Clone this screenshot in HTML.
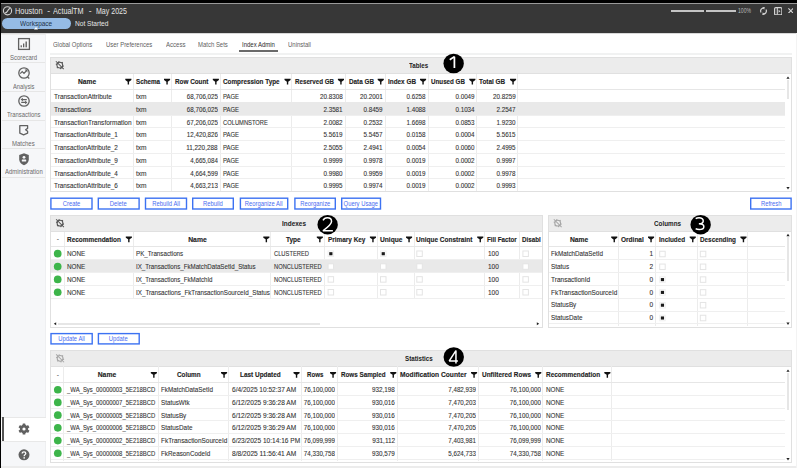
<!DOCTYPE html><html><head><meta charset="utf-8"><style>*{margin:0;padding:0;box-sizing:border-box}html,body{width:797px;height:468px;overflow:hidden}body{position:relative;background:#fff;font-family:"Liberation Sans",sans-serif;color:#333}.a{position:absolute}.t{position:absolute;white-space:nowrap}.btn{border:1.5px solid #3f74f2;background:#fff}</style></head><body>
<div class="a" style="left:0px;top:0px;width:797px;height:3px;background:#000"></div>
<div class="a" style="left:0px;top:3px;width:797px;height:1px;background:#9a9a9a"></div>
<div class="a" style="left:0px;top:4px;width:797px;height:28.8px;background:#373737"></div>
<div class="a" style="left:0px;top:32.8px;width:797px;height:0.8px;background:#d8d8d8"></div>
<svg class="a" style="left:2px;top:6px" width="11" height="11" viewBox="0 0 11 11"><circle cx="5.5" cy="4.8" r="4.1" fill="none" stroke="#d2d2d2" stroke-width="1.1"/><path d="M8.2 2.4C6.8 2.6 6.4 3.6 5.8 4.6C5.2 5.7 4.6 6.9 2.8 7.2" fill="none" stroke="#d2d2d2" stroke-width="1.2"/></svg>
<div class="t" style="left:15.3px;top:5.2px;font-size:8.6px;line-height:12px;color:#e6e6e6;transform:scaleX(0.8616);transform-origin:left;">Houston</div>
<div class="t" style="left:47.3px;top:5.2px;font-size:8.6px;line-height:12px;color:#e6e6e6;">-</div>
<div class="t" style="left:53.4px;top:5.2px;font-size:8.6px;line-height:12px;color:#e6e6e6;transform:scaleX(0.8425);transform-origin:left;">ActualTM</div>
<div class="t" style="left:88.8px;top:5.2px;font-size:8.6px;line-height:12px;color:#e6e6e6;">-</div>
<div class="t" style="left:95.6px;top:5.2px;font-size:8.6px;line-height:12px;color:#e6e6e6;transform:scaleX(0.8181);transform-origin:left;">May 2025</div>
<div class="a" style="left:2px;top:17.9px;width:68.7px;height:10.9px;border-radius:5.5px;background:#95bbe5"></div>
<svg class="a" style="left:34px;top:27px" width="4" height="2.5" viewBox="0 0 4 2.5"><path d="M0 2.5L2 0L4 2.5Z" fill="#fff"/></svg>
<div class="t" style="left:20.3px;top:18.6px;font-size:7px;line-height:10px;color:#22344a;transform:scaleX(0.9202);transform-origin:left;">Workspace</div>
<div class="t" style="left:75.3px;top:18.6px;font-size:7px;line-height:10px;color:#e6e6e6;transform:scaleX(0.9433);transform-origin:left;">Not Started</div>
<div class="a" style="left:671px;top:10px;width:33px;height:2px;background:#c4c4c4"></div>
<div class="a" style="left:706px;top:10px;width:29.6px;height:2px;background:#c4c4c4"></div>
<div class="t" style="left:737.7px;top:7px;font-size:6.3px;line-height:8px;color:#bdbdbd;transform:scaleX(0.8068);transform-origin:left;">100%</div>
<svg class="a" style="left:758.5px;top:5.5px" width="9" height="10" viewBox="0 0 9 10"><g transform="rotate(-30 4.5 5)"><path d="M1.6 5A2.9 2.9 0 0 1 6.2 2.6" fill="none" stroke="#d4d4d4" stroke-width="1.2"/><path d="M7.4 5A2.9 2.9 0 0 1 2.8 7.4" fill="none" stroke="#d4d4d4" stroke-width="1.2"/><path d="M5.2 1.2L7.6 2.2L5.8 4.2Z" fill="#d4d4d4"/><path d="M3.8 8.8L1.4 7.8L3.2 5.8Z" fill="#d4d4d4"/></g></svg>
<svg class="a" style="left:773.5px;top:6.5px" width="8.5" height="8.5" viewBox="0 0 8.5 8.5"><rect x="0.6" y="0.6" width="7.3" height="7.3" rx="1.2" fill="none" stroke="#d4d4d4" stroke-width="1.2"/><path d="M3.3 1V7.5" stroke="#d4d4d4" stroke-width="1.1"/><path d="M4.6 2.8L6.4 4.25L4.6 5.7Z" fill="#d4d4d4"/></svg>
<svg class="a" style="left:787.8px;top:7.8px" width="5.6" height="5.6" viewBox="0 0 5.6 5.6"><path d="M0.4 0.4L5.2 5.2M5.2 0.4L0.4 5.2" stroke="#d8d8d8" stroke-width="1.1"/></svg>
<div class="a" style="left:1px;top:34px;width:44.8px;height:434px;background:#f6f7f9;border-right:1px solid #eeeff1;border-top:1px solid #ececec"></div>
<div class="a" style="left:2px;top:62px;width:43px;height:1px;background:#e6e6e6"></div>
<div class="a" style="left:2px;top:90.5px;width:43px;height:1px;background:#e6e6e6"></div>
<div class="a" style="left:2px;top:119.5px;width:43px;height:1px;background:#e6e6e6"></div>
<div class="a" style="left:2px;top:148px;width:43px;height:1px;background:#e6e6e6"></div>
<div class="a" style="left:2px;top:176.5px;width:43px;height:1px;background:#e6e6e6"></div>
<svg class="a" style="left:17px;top:37px" width="14" height="14" viewBox="0 0 14 14"><rect x="1.6" y="1.6" width="10.8" height="10.8" fill="none" stroke="#616161" stroke-width="1.3"/><rect x="3.6" y="8.3" width="1.3" height="2" fill="#616161"/><rect x="6" y="6.5" width="1.3" height="3.8" fill="#616161"/><rect x="8.5" y="4.5" width="1.4" height="5.8" fill="#616161"/></svg>
<div class="t" style="left:9.7px;top:53.8px;font-size:6.5px;line-height:8px;color:#6a6a6a;transform:scaleX(0.9147);transform-origin:left;">Scorecard</div>
<svg class="a" style="left:16.5px;top:65.5px" width="14" height="14" viewBox="0 0 14 14"><circle cx="7" cy="7" r="5.2" fill="none" stroke="#616161" stroke-width="1.3"/><path d="M3.2 7.6L5.2 5.6L7 7.4L9.2 5" fill="none" stroke="#616161" stroke-width="1.2"/><path d="M7.6 3.6H10.4V6.4Z" fill="#616161"/><path d="M10.5 11L12.3 12.5" stroke="#616161" stroke-width="1.3"/></svg>
<div class="t" style="left:13px;top:82.6px;font-size:6.5px;line-height:8px;color:#6a6a6a;transform:scaleX(0.8883);transform-origin:left;">Analysis</div>
<svg class="a" style="left:16.7px;top:94.3px" width="14" height="14" viewBox="0 0 14 14"><circle cx="7" cy="7" r="5.2" fill="none" stroke="#616161" stroke-width="1.3"/><path d="M5.3 5.6H9.8M8.7 8.4H4.2" stroke="#616161" stroke-width="1.1"/><path d="M3.6 5.6L5.9 3.8V7.4Z" fill="#616161"/><path d="M10.4 8.4L8.1 6.6V10.2Z" fill="#616161"/></svg>
<div class="t" style="left:6.9px;top:111.2px;font-size:6.5px;line-height:8px;color:#6a6a6a;transform:scaleX(0.9034);transform-origin:left;">Transactions</div>
<svg class="a" style="left:17px;top:123px" width="14" height="14" viewBox="0 0 14 14"><path d="M2.8 2.6H10.6V5.4L8.6 6.8L10.6 8.2V10.2L6.6 11.8L2.8 10.2Z" fill="none" stroke="#616161" stroke-width="1.3" stroke-linejoin="round"/></svg>
<div class="t" style="left:12.3px;top:139.9px;font-size:6.5px;line-height:8px;color:#6a6a6a;transform:scaleX(0.9240);transform-origin:left;">Matches</div>
<svg class="a" style="left:17px;top:151.5px" width="14" height="14" viewBox="0 0 14 14"><path d="M7 1.2L11.8 3V7.2C11.8 10 9.8 12.2 7 13.2C4.2 12.2 2.2 10 2.2 7.2V3Z" fill="#616161"/><circle cx="7" cy="5.3" r="1.4" fill="#f6f7f9"/><rect x="4.8" y="7.6" width="4.4" height="2" rx="0.5" fill="#f6f7f9"/></svg>
<div class="t" style="left:4.6px;top:168.1px;font-size:6.5px;line-height:8px;color:#6a6a6a;transform:scaleX(0.9154);transform-origin:left;">Administration</div>
<div class="a" style="left:1px;top:416.5px;width:44.5px;height:25px;background:#fff;border-top:1px solid #e8e8e8;border-bottom:1px solid #e8e8e8"></div>
<div class="a" style="left:2.2px;top:416.8px;width:1.5px;height:24.5px;background:#555"></div>
<svg class="a" style="left:18px;top:423px" width="12" height="12" viewBox="0 0 12 12"><circle cx="6" cy="6" r="4.2" fill="#616161"/><rect x="4.6" y="0.4" width="2.8" height="3" rx="0.6" fill="#616161" transform="rotate(0 6 6)"/><rect x="4.6" y="0.4" width="2.8" height="3" rx="0.6" fill="#616161" transform="rotate(60 6 6)"/><rect x="4.6" y="0.4" width="2.8" height="3" rx="0.6" fill="#616161" transform="rotate(120 6 6)"/><rect x="4.6" y="0.4" width="2.8" height="3" rx="0.6" fill="#616161" transform="rotate(180 6 6)"/><rect x="4.6" y="0.4" width="2.8" height="3" rx="0.6" fill="#616161" transform="rotate(240 6 6)"/><rect x="4.6" y="0.4" width="2.8" height="3" rx="0.6" fill="#616161" transform="rotate(300 6 6)"/><circle cx="6" cy="6" r="1.6" fill="#fff"/></svg>
<svg class="a" style="left:18px;top:449px" width="12" height="12" viewBox="0 0 12 12"><circle cx="6" cy="5.8" r="5.5" fill="#616161"/><path d="M4.2 4.6C4.2 3.5 5 2.8 6 2.8C7 2.8 7.8 3.5 7.8 4.4C7.8 5.5 6.4 5.7 6.2 6.9V7.3" fill="none" stroke="#fff" stroke-width="1.3"/><circle cx="6.15" cy="8.9" r="0.8" fill="#fff"/></svg>
<div class="t" style="left:53.4px;top:41px;font-size:6.5px;line-height:8px;color:#5e5e5e;transform:scaleX(0.9117);transform-origin:left;">Global Options</div>
<div class="t" style="left:106.2px;top:41px;font-size:6.5px;line-height:8px;color:#5e5e5e;transform:scaleX(0.9135);transform-origin:left;">User Preferences</div>
<div class="t" style="left:165.5px;top:41px;font-size:6.5px;line-height:8px;color:#5e5e5e;transform:scaleX(0.9308);transform-origin:left;">Access</div>
<div class="t" style="left:198.4px;top:41px;font-size:6.5px;line-height:8px;color:#5e5e5e;transform:scaleX(0.9166);transform-origin:left;">Match Sets</div>
<div class="t" style="left:241.8px;top:41px;font-size:6.5px;line-height:8px;color:#2a2a2a;transform:scaleX(0.9197);transform-origin:left;">Index Admin</div>
<div class="t" style="left:288px;top:41px;font-size:6.5px;line-height:8px;color:#5e5e5e;transform:scaleX(0.9186);transform-origin:left;">Uninstall</div>
<div class="a" style="left:239px;top:50px;width:38.7px;height:2px;background:#6a6a6a"></div>
<div class="a" style="left:50px;top:53px;width:742px;height:2px;background:#f1f2f2"></div>
<div class="a" style="left:50px;top:56.8px;width:742px;height:135px;border:1px solid #e0e0e0;background:#fff"></div>
<div class="a" style="left:51px;top:57.8px;width:740px;height:16.7px;background:#ececec;border-bottom:1px solid #e0e0e0"></div>
<svg class="a" style="left:53px;top:59px" width="12" height="12" viewBox="0 0 12 12"><circle cx="6.80" cy="6.15" r="2.9" fill="none" stroke="#555555" stroke-width="1.05"/><path d="M9.60 6.90L10.76 7.21M7.55 8.95L7.86 10.11M4.75 8.20L3.90 9.05M4.00 5.40L2.84 5.09M6.05 3.35L5.74 2.19M8.85 4.10L9.70 3.25" stroke="#555555" stroke-width="1.1"/><path d="M2.90 2.25L10.70 10.05" stroke="#555555" stroke-width="1.05"/></svg>
<div class="t" style="left:409.4px;top:61.15px;font-size:6.8px;line-height:10px;font-weight:700;color:#222;transform:scaleX(0.9126);transform-origin:left;">Tables</div>
<div class="a" style="left:133px;top:73.5px;width:1px;height:117.5px;background:#ececec"></div>
<div class="a" style="left:171px;top:73.5px;width:1px;height:117.5px;background:#ececec"></div>
<div class="a" style="left:220px;top:73.5px;width:1px;height:117.5px;background:#ececec"></div>
<div class="a" style="left:291px;top:73.5px;width:1px;height:117.5px;background:#ececec"></div>
<div class="a" style="left:344.8px;top:73.5px;width:1px;height:117.5px;background:#ececec"></div>
<div class="a" style="left:384.7px;top:73.5px;width:1px;height:117.5px;background:#ececec"></div>
<div class="a" style="left:427.8px;top:73.5px;width:1px;height:117.5px;background:#ececec"></div>
<div class="a" style="left:475.7px;top:73.5px;width:1px;height:117.5px;background:#ececec"></div>
<div class="a" style="left:516.6px;top:73.5px;width:1px;height:117.5px;background:#ececec"></div>
<div class="a" style="left:51px;top:88.5px;width:734px;height:1px;background:#e6e6e6"></div>
<div class="t" style="left:78.4px;top:76.9px;font-size:6.8px;line-height:10px;font-weight:700;color:#222;transform:scaleX(0.9827);transform-origin:left;-webkit-text-stroke:0.12px #222;">Name</div>
<svg class="a" style="left:124px;top:77px" width="9" height="9" viewBox="0 0 9 9"><g transform="translate(1.30 1.80)"><path d="M0 0H6.1V1.3L3.75 2.9V5.8H2.35V2.9L0 1.3Z" fill="#111"/></g></svg>
<div class="t" style="left:135.7px;top:76.9px;font-size:6.8px;line-height:10px;font-weight:700;color:#222;transform:scaleX(0.9240);transform-origin:left;-webkit-text-stroke:0.12px #222;">Schema</div>
<svg class="a" style="left:163px;top:77px" width="9" height="9" viewBox="0 0 9 9"><g transform="translate(1.00 1.80)"><path d="M0 0H6.1V1.3L3.75 2.9V5.8H2.35V2.9L0 1.3Z" fill="#111"/></g></svg>
<div class="t" style="left:174.5px;top:76.9px;font-size:6.8px;line-height:10px;font-weight:700;color:#222;transform:scaleX(0.9337);transform-origin:left;-webkit-text-stroke:0.12px #222;">Row Count</div>
<svg class="a" style="left:211px;top:77px" width="9" height="9" viewBox="0 0 9 9"><g transform="translate(1.80 1.80)"><path d="M0 0H6.1V1.3L3.75 2.9V5.8H2.35V2.9L0 1.3Z" fill="#111"/></g></svg>
<div class="t" style="left:223px;top:76.9px;font-size:6.8px;line-height:10px;font-weight:700;color:#222;transform:scaleX(0.9323);transform-origin:left;-webkit-text-stroke:0.12px #222;">Compression Type</div>
<svg class="a" style="left:283px;top:77px" width="9" height="9" viewBox="0 0 9 9"><g transform="translate(1.50 1.80)"><path d="M0 0H6.1V1.3L3.75 2.9V5.8H2.35V2.9L0 1.3Z" fill="#111"/></g></svg>
<div class="t" style="left:294.6px;top:76.9px;font-size:6.8px;line-height:10px;font-weight:700;color:#222;transform:scaleX(0.9131);transform-origin:left;-webkit-text-stroke:0.12px #222;">Reserved GB</div>
<svg class="a" style="left:336px;top:77px" width="9" height="9" viewBox="0 0 9 9"><g transform="translate(1.90 1.80)"><path d="M0 0H6.1V1.3L3.75 2.9V5.8H2.35V2.9L0 1.3Z" fill="#111"/></g></svg>
<div class="t" style="left:348.5px;top:76.9px;font-size:6.8px;line-height:10px;font-weight:700;color:#222;transform:scaleX(0.9318);transform-origin:left;-webkit-text-stroke:0.12px #222;">Data GB</div>
<svg class="a" style="left:376px;top:77px" width="9" height="9" viewBox="0 0 9 9"><g transform="translate(1.70 1.80)"><path d="M0 0H6.1V1.3L3.75 2.9V5.8H2.35V2.9L0 1.3Z" fill="#111"/></g></svg>
<div class="t" style="left:388px;top:76.9px;font-size:6.8px;line-height:10px;font-weight:700;color:#222;transform:scaleX(0.9380);transform-origin:left;-webkit-text-stroke:0.12px #222;">Index GB</div>
<svg class="a" style="left:419px;top:77px" width="9" height="9" viewBox="0 0 9 9"><g transform="translate(1.00 1.80)"><path d="M0 0H6.1V1.3L3.75 2.9V5.8H2.35V2.9L0 1.3Z" fill="#111"/></g></svg>
<div class="t" style="left:431px;top:76.9px;font-size:6.8px;line-height:10px;font-weight:700;color:#222;transform:scaleX(0.9183);transform-origin:left;-webkit-text-stroke:0.12px #222;">Unused GB</div>
<svg class="a" style="left:468px;top:77px" width="9" height="9" viewBox="0 0 9 9"><g transform="translate(1.30 1.80)"><path d="M0 0H6.1V1.3L3.75 2.9V5.8H2.35V2.9L0 1.3Z" fill="#111"/></g></svg>
<div class="t" style="left:479.4px;top:76.9px;font-size:6.8px;line-height:10px;font-weight:700;color:#222;transform:scaleX(0.9415);transform-origin:left;-webkit-text-stroke:0.12px #222;">Total GB</div>
<svg class="a" style="left:509px;top:77px" width="9" height="9" viewBox="0 0 9 9"><g transform="translate(1.00 1.80)"><path d="M0 0H6.1V1.3L3.75 2.9V5.8H2.35V2.9L0 1.3Z" fill="#111"/></g></svg>
<div class="a" style="left:51px;top:101.75px;width:734px;height:1px;background:#efefef"></div>
<div class="t" style="left:54px;top:92.08px;font-size:7.4px;line-height:10px;color:#333;transform:scaleX(0.8783);transform-origin:left;-webkit-text-stroke:0.1px #333;">TransactionAttribute</div>
<div class="t" style="left:135.7px;top:92.08px;font-size:7.4px;line-height:10px;color:#333;transform:scaleX(0.8904);transform-origin:left;-webkit-text-stroke:0.1px #333;">txm</div>
<div class="t" style="left:180.86px;top:92.08px;font-size:7.4px;line-height:10px;color:#333;transform:scaleX(0.8431);transform-origin:right;-webkit-text-stroke:0.1px #333;">68,706,025</div>
<div class="t" style="left:223px;top:92.08px;font-size:7.4px;line-height:10px;color:#333;transform:scaleX(0.8018);transform-origin:left;-webkit-text-stroke:0.1px #333;">PAGE</div>
<div class="t" style="left:316.35px;top:92.08px;font-size:7.4px;line-height:10px;color:#333;transform:scaleX(0.8540);transform-origin:right;-webkit-text-stroke:0.1px #333;">20.8308</div>
<div class="t" style="left:356.05px;top:92.08px;font-size:7.4px;line-height:10px;color:#333;transform:scaleX(0.8540);transform-origin:right;-webkit-text-stroke:0.1px #333;">20.2001</div>
<div class="t" style="left:403.17px;top:92.08px;font-size:7.4px;line-height:10px;color:#333;transform:scaleX(0.8495);transform-origin:right;-webkit-text-stroke:0.1px #333;">0.6258</div>
<div class="t" style="left:451.87px;top:92.08px;font-size:7.4px;line-height:10px;color:#333;transform:scaleX(0.8495);transform-origin:right;-webkit-text-stroke:0.1px #333;">0.0049</div>
<div class="t" style="left:488.55px;top:92.08px;font-size:7.4px;line-height:10px;color:#333;transform:scaleX(0.8540);transform-origin:right;-webkit-text-stroke:0.1px #333;">20.8259</div>
<div class="a" style="left:51px;top:102.25px;width:734px;height:12.75px;background:#e9e9e9"></div>
<div class="a" style="left:51px;top:114.5px;width:734px;height:1px;background:#efefef"></div>
<div class="t" style="left:54px;top:104.83px;font-size:7.4px;line-height:10px;color:#333;transform:scaleX(0.8844);transform-origin:left;-webkit-text-stroke:0.1px #333;">Transactions</div>
<div class="t" style="left:135.7px;top:104.83px;font-size:7.4px;line-height:10px;color:#333;transform:scaleX(0.8904);transform-origin:left;-webkit-text-stroke:0.1px #333;">txm</div>
<div class="t" style="left:180.86px;top:104.83px;font-size:7.4px;line-height:10px;color:#333;transform:scaleX(0.8431);transform-origin:right;-webkit-text-stroke:0.1px #333;">68,706,025</div>
<div class="t" style="left:223px;top:104.83px;font-size:7.4px;line-height:10px;color:#333;transform:scaleX(0.8018);transform-origin:left;-webkit-text-stroke:0.1px #333;">PAGE</div>
<div class="t" style="left:320.47px;top:104.83px;font-size:7.4px;line-height:10px;color:#333;transform:scaleX(0.8495);transform-origin:right;-webkit-text-stroke:0.1px #333;">2.3581</div>
<div class="t" style="left:360.17px;top:104.83px;font-size:7.4px;line-height:10px;color:#333;transform:scaleX(0.8495);transform-origin:right;-webkit-text-stroke:0.1px #333;">0.8459</div>
<div class="t" style="left:403.17px;top:104.83px;font-size:7.4px;line-height:10px;color:#333;transform:scaleX(0.8495);transform-origin:right;-webkit-text-stroke:0.1px #333;">1.4088</div>
<div class="t" style="left:451.87px;top:104.83px;font-size:7.4px;line-height:10px;color:#333;transform:scaleX(0.8495);transform-origin:right;-webkit-text-stroke:0.1px #333;">0.1034</div>
<div class="t" style="left:492.67px;top:104.83px;font-size:7.4px;line-height:10px;color:#333;transform:scaleX(0.8495);transform-origin:right;-webkit-text-stroke:0.1px #333;">2.2547</div>
<div class="a" style="left:51px;top:127.25px;width:734px;height:1px;background:#efefef"></div>
<div class="t" style="left:54px;top:117.58px;font-size:7.4px;line-height:10px;color:#333;transform:scaleX(0.8847);transform-origin:left;-webkit-text-stroke:0.1px #333;">TransactionTransformation</div>
<div class="t" style="left:135.7px;top:117.58px;font-size:7.4px;line-height:10px;color:#333;transform:scaleX(0.8904);transform-origin:left;-webkit-text-stroke:0.1px #333;">txm</div>
<div class="t" style="left:180.86px;top:117.58px;font-size:7.4px;line-height:10px;color:#333;transform:scaleX(0.8431);transform-origin:right;-webkit-text-stroke:0.1px #333;">67,206,025</div>
<div class="t" style="left:223px;top:117.58px;font-size:7.4px;line-height:10px;color:#333;transform:scaleX(0.7822);transform-origin:left;-webkit-text-stroke:0.1px #333;">COLUMNSTORE</div>
<div class="t" style="left:320.47px;top:117.58px;font-size:7.4px;line-height:10px;color:#333;transform:scaleX(0.8495);transform-origin:right;-webkit-text-stroke:0.1px #333;">2.0082</div>
<div class="t" style="left:360.17px;top:117.58px;font-size:7.4px;line-height:10px;color:#333;transform:scaleX(0.8495);transform-origin:right;-webkit-text-stroke:0.1px #333;">0.2532</div>
<div class="t" style="left:403.17px;top:117.58px;font-size:7.4px;line-height:10px;color:#333;transform:scaleX(0.8495);transform-origin:right;-webkit-text-stroke:0.1px #333;">1.6698</div>
<div class="t" style="left:451.87px;top:117.58px;font-size:7.4px;line-height:10px;color:#333;transform:scaleX(0.8495);transform-origin:right;-webkit-text-stroke:0.1px #333;">0.0853</div>
<div class="t" style="left:492.67px;top:117.58px;font-size:7.4px;line-height:10px;color:#333;transform:scaleX(0.8495);transform-origin:right;-webkit-text-stroke:0.1px #333;">1.9230</div>
<div class="a" style="left:51px;top:140px;width:734px;height:1px;background:#efefef"></div>
<div class="t" style="left:54px;top:130.32px;font-size:7.4px;line-height:10px;color:#333;transform:scaleX(0.8607);transform-origin:left;-webkit-text-stroke:0.1px #333;">TransactionAttribute_1</div>
<div class="t" style="left:135.7px;top:130.32px;font-size:7.4px;line-height:10px;color:#333;transform:scaleX(0.8904);transform-origin:left;-webkit-text-stroke:0.1px #333;">txm</div>
<div class="t" style="left:180.86px;top:130.32px;font-size:7.4px;line-height:10px;color:#333;transform:scaleX(0.8431);transform-origin:right;-webkit-text-stroke:0.1px #333;">12,420,826</div>
<div class="t" style="left:223px;top:130.32px;font-size:7.4px;line-height:10px;color:#333;transform:scaleX(0.8018);transform-origin:left;-webkit-text-stroke:0.1px #333;">PAGE</div>
<div class="t" style="left:320.47px;top:130.32px;font-size:7.4px;line-height:10px;color:#333;transform:scaleX(0.8495);transform-origin:right;-webkit-text-stroke:0.1px #333;">5.5619</div>
<div class="t" style="left:360.17px;top:130.32px;font-size:7.4px;line-height:10px;color:#333;transform:scaleX(0.8495);transform-origin:right;-webkit-text-stroke:0.1px #333;">5.5457</div>
<div class="t" style="left:403.17px;top:130.32px;font-size:7.4px;line-height:10px;color:#333;transform:scaleX(0.8495);transform-origin:right;-webkit-text-stroke:0.1px #333;">0.0158</div>
<div class="t" style="left:451.87px;top:130.32px;font-size:7.4px;line-height:10px;color:#333;transform:scaleX(0.8495);transform-origin:right;-webkit-text-stroke:0.1px #333;">0.0004</div>
<div class="t" style="left:492.67px;top:130.32px;font-size:7.4px;line-height:10px;color:#333;transform:scaleX(0.8495);transform-origin:right;-webkit-text-stroke:0.1px #333;">5.5615</div>
<div class="a" style="left:51px;top:152.75px;width:734px;height:1px;background:#efefef"></div>
<div class="t" style="left:54px;top:143.07px;font-size:7.4px;line-height:10px;color:#333;transform:scaleX(0.8607);transform-origin:left;-webkit-text-stroke:0.1px #333;">TransactionAttribute_2</div>
<div class="t" style="left:135.7px;top:143.07px;font-size:7.4px;line-height:10px;color:#333;transform:scaleX(0.8904);transform-origin:left;-webkit-text-stroke:0.1px #333;">txm</div>
<div class="t" style="left:181.41px;top:143.07px;font-size:7.4px;line-height:10px;color:#333;transform:scaleX(0.8558);transform-origin:right;-webkit-text-stroke:0.1px #333;">11,220,288</div>
<div class="t" style="left:223px;top:143.07px;font-size:7.4px;line-height:10px;color:#333;transform:scaleX(0.8018);transform-origin:left;-webkit-text-stroke:0.1px #333;">PAGE</div>
<div class="t" style="left:320.47px;top:143.07px;font-size:7.4px;line-height:10px;color:#333;transform:scaleX(0.8495);transform-origin:right;-webkit-text-stroke:0.1px #333;">2.5055</div>
<div class="t" style="left:360.17px;top:143.07px;font-size:7.4px;line-height:10px;color:#333;transform:scaleX(0.8495);transform-origin:right;-webkit-text-stroke:0.1px #333;">2.4941</div>
<div class="t" style="left:403.17px;top:143.07px;font-size:7.4px;line-height:10px;color:#333;transform:scaleX(0.8495);transform-origin:right;-webkit-text-stroke:0.1px #333;">0.0054</div>
<div class="t" style="left:451.87px;top:143.07px;font-size:7.4px;line-height:10px;color:#333;transform:scaleX(0.8495);transform-origin:right;-webkit-text-stroke:0.1px #333;">0.0060</div>
<div class="t" style="left:492.67px;top:143.07px;font-size:7.4px;line-height:10px;color:#333;transform:scaleX(0.8495);transform-origin:right;-webkit-text-stroke:0.1px #333;">2.4995</div>
<div class="a" style="left:51px;top:165.5px;width:734px;height:1px;background:#efefef"></div>
<div class="t" style="left:54px;top:155.82px;font-size:7.4px;line-height:10px;color:#333;transform:scaleX(0.8607);transform-origin:left;-webkit-text-stroke:0.1px #333;">TransactionAttribute_9</div>
<div class="t" style="left:135.7px;top:155.82px;font-size:7.4px;line-height:10px;color:#333;transform:scaleX(0.8904);transform-origin:left;-webkit-text-stroke:0.1px #333;">txm</div>
<div class="t" style="left:184.98px;top:155.82px;font-size:7.4px;line-height:10px;color:#333;transform:scaleX(0.8387);transform-origin:right;-webkit-text-stroke:0.1px #333;">4,665,084</div>
<div class="t" style="left:223px;top:155.82px;font-size:7.4px;line-height:10px;color:#333;transform:scaleX(0.8018);transform-origin:left;-webkit-text-stroke:0.1px #333;">PAGE</div>
<div class="t" style="left:320.47px;top:155.82px;font-size:7.4px;line-height:10px;color:#333;transform:scaleX(0.8495);transform-origin:right;-webkit-text-stroke:0.1px #333;">0.9999</div>
<div class="t" style="left:360.17px;top:155.82px;font-size:7.4px;line-height:10px;color:#333;transform:scaleX(0.8495);transform-origin:right;-webkit-text-stroke:0.1px #333;">0.9978</div>
<div class="t" style="left:403.17px;top:155.82px;font-size:7.4px;line-height:10px;color:#333;transform:scaleX(0.8495);transform-origin:right;-webkit-text-stroke:0.1px #333;">0.0019</div>
<div class="t" style="left:451.87px;top:155.82px;font-size:7.4px;line-height:10px;color:#333;transform:scaleX(0.8495);transform-origin:right;-webkit-text-stroke:0.1px #333;">0.0002</div>
<div class="t" style="left:492.67px;top:155.82px;font-size:7.4px;line-height:10px;color:#333;transform:scaleX(0.8495);transform-origin:right;-webkit-text-stroke:0.1px #333;">0.9997</div>
<div class="a" style="left:51px;top:178.25px;width:734px;height:1px;background:#efefef"></div>
<div class="t" style="left:54px;top:168.57px;font-size:7.4px;line-height:10px;color:#333;transform:scaleX(0.8607);transform-origin:left;-webkit-text-stroke:0.1px #333;">TransactionAttribute_4</div>
<div class="t" style="left:135.7px;top:168.57px;font-size:7.4px;line-height:10px;color:#333;transform:scaleX(0.8904);transform-origin:left;-webkit-text-stroke:0.1px #333;">txm</div>
<div class="t" style="left:184.98px;top:168.57px;font-size:7.4px;line-height:10px;color:#333;transform:scaleX(0.8387);transform-origin:right;-webkit-text-stroke:0.1px #333;">4,664,599</div>
<div class="t" style="left:223px;top:168.57px;font-size:7.4px;line-height:10px;color:#333;transform:scaleX(0.8018);transform-origin:left;-webkit-text-stroke:0.1px #333;">PAGE</div>
<div class="t" style="left:320.47px;top:168.57px;font-size:7.4px;line-height:10px;color:#333;transform:scaleX(0.8495);transform-origin:right;-webkit-text-stroke:0.1px #333;">0.9980</div>
<div class="t" style="left:360.17px;top:168.57px;font-size:7.4px;line-height:10px;color:#333;transform:scaleX(0.8495);transform-origin:right;-webkit-text-stroke:0.1px #333;">0.9959</div>
<div class="t" style="left:403.17px;top:168.57px;font-size:7.4px;line-height:10px;color:#333;transform:scaleX(0.8495);transform-origin:right;-webkit-text-stroke:0.1px #333;">0.0019</div>
<div class="t" style="left:451.87px;top:168.57px;font-size:7.4px;line-height:10px;color:#333;transform:scaleX(0.8495);transform-origin:right;-webkit-text-stroke:0.1px #333;">0.0002</div>
<div class="t" style="left:492.67px;top:168.57px;font-size:7.4px;line-height:10px;color:#333;transform:scaleX(0.8495);transform-origin:right;-webkit-text-stroke:0.1px #333;">0.9978</div>
<div class="t" style="left:54px;top:181.32px;font-size:7.4px;line-height:10px;color:#333;transform:scaleX(0.8607);transform-origin:left;-webkit-text-stroke:0.1px #333;">TransactionAttribute_6</div>
<div class="t" style="left:135.7px;top:181.32px;font-size:7.4px;line-height:10px;color:#333;transform:scaleX(0.8904);transform-origin:left;-webkit-text-stroke:0.1px #333;">txm</div>
<div class="t" style="left:184.98px;top:181.32px;font-size:7.4px;line-height:10px;color:#333;transform:scaleX(0.8387);transform-origin:right;-webkit-text-stroke:0.1px #333;">4,663,213</div>
<div class="t" style="left:223px;top:181.32px;font-size:7.4px;line-height:10px;color:#333;transform:scaleX(0.8018);transform-origin:left;-webkit-text-stroke:0.1px #333;">PAGE</div>
<div class="t" style="left:320.47px;top:181.32px;font-size:7.4px;line-height:10px;color:#333;transform:scaleX(0.8495);transform-origin:right;-webkit-text-stroke:0.1px #333;">0.9995</div>
<div class="t" style="left:360.17px;top:181.32px;font-size:7.4px;line-height:10px;color:#333;transform:scaleX(0.8495);transform-origin:right;-webkit-text-stroke:0.1px #333;">0.9974</div>
<div class="t" style="left:403.17px;top:181.32px;font-size:7.4px;line-height:10px;color:#333;transform:scaleX(0.8495);transform-origin:right;-webkit-text-stroke:0.1px #333;">0.0019</div>
<div class="t" style="left:451.87px;top:181.32px;font-size:7.4px;line-height:10px;color:#333;transform:scaleX(0.8495);transform-origin:right;-webkit-text-stroke:0.1px #333;">0.0002</div>
<div class="t" style="left:492.67px;top:181.32px;font-size:7.4px;line-height:10px;color:#333;transform:scaleX(0.8495);transform-origin:right;-webkit-text-stroke:0.1px #333;">0.9993</div>
<svg class="a" style="left:785px;top:74px" width="6" height="6" viewBox="0 0 6 6"><path d="M1.40 4.80L3.00 2.40L4.60 4.80Z" fill="#222"/></svg>
<svg class="a" style="left:785px;top:185px" width="6" height="6" viewBox="0 0 6 6"><path d="M1.40 2.00L3.00 4.40L4.60 2.00Z" fill="#222"/></svg>
<div class="a" style="left:787px;top:80px;width:2px;height:18.8px;background:#e6e6e6"></div>
<svg class="a" style="left:50px;top:197px" width="44" height="14" viewBox="0 0 44 14"><rect x="0.9" y="1.2" width="41.1" height="10.8" fill="#fff" stroke="#3c72f2" stroke-width="1.4"/></svg>
<div class="t" style="left:61.84px;top:198.8px;font-size:6.4px;line-height:10px;color:#4a6cf0;transform:scaleX(0.9160);transform-origin:center;">Create</div>
<svg class="a" style="left:97px;top:197px" width="44" height="14" viewBox="0 0 44 14"><rect x="1.3" y="1.2" width="40.8" height="10.8" fill="#fff" stroke="#3c72f2" stroke-width="1.4"/></svg>
<div class="t" style="left:109.45px;top:198.8px;font-size:6.4px;line-height:10px;color:#4a6cf0;transform:scaleX(0.9160);transform-origin:center;">Delete</div>
<svg class="a" style="left:144px;top:197px" width="45" height="14" viewBox="0 0 45 14"><rect x="1.5" y="1.2" width="41" height="10.8" fill="#fff" stroke="#3c72f2" stroke-width="1.4"/></svg>
<div class="t" style="left:150.88px;top:198.8px;font-size:6.4px;line-height:10px;color:#4a6cf0;transform:scaleX(0.9160);transform-origin:center;">Rebuild All</div>
<svg class="a" style="left:192px;top:197px" width="43" height="14" viewBox="0 0 43 14"><rect x="0.7" y="1.2" width="40.6" height="10.8" fill="#fff" stroke="#3c72f2" stroke-width="1.4"/></svg>
<div class="t" style="left:202.15px;top:198.8px;font-size:6.4px;line-height:10px;color:#4a6cf0;transform:scaleX(0.9160);transform-origin:center;">Rebuild</div>
<svg class="a" style="left:239px;top:197px" width="51" height="14" viewBox="0 0 51 14"><rect x="1.4" y="1.2" width="47.3" height="10.8" fill="#fff" stroke="#3c72f2" stroke-width="1.4"/></svg>
<div class="t" style="left:243.41px;top:198.8px;font-size:6.4px;line-height:10px;color:#4a6cf0;transform:scaleX(0.9160);transform-origin:center;">Reorganize All</div>
<svg class="a" style="left:294px;top:197px" width="43" height="14" viewBox="0 0 43 14"><rect x="0.9" y="1.2" width="40.4" height="10.8" fill="#fff" stroke="#3c72f2" stroke-width="1.4"/></svg>
<div class="t" style="left:298.73px;top:198.8px;font-size:6.4px;line-height:10px;color:#4a6cf0;transform:scaleX(0.9160);transform-origin:center;">Reorganize</div>
<svg class="a" style="left:341px;top:197px" width="42" height="14" viewBox="0 0 42 14"><rect x="0.7" y="1.2" width="38.8" height="10.8" fill="#fff" stroke="#3c72f2" stroke-width="1.4"/></svg>
<div class="t" style="left:342.25px;top:198.8px;font-size:6.4px;line-height:10px;color:#4a6cf0;transform:scaleX(0.9160);transform-origin:center;">Query Usage</div>
<svg class="a" style="left:750px;top:197px" width="43" height="14" viewBox="0 0 43 14"><rect x="0.7" y="1.2" width="40.4" height="10.8" fill="#fff" stroke="#3c72f2" stroke-width="1.4"/></svg>
<div class="t" style="left:759.69px;top:198.8px;font-size:6.4px;line-height:10px;color:#4a6cf0;transform:scaleX(0.9160);transform-origin:center;">Refresh</div>
<div class="a" style="left:50.2px;top:214.8px;width:492.5px;height:113.2px;border:1px solid #e0e0e0;background:#fff"></div>
<div class="a" style="left:51.2px;top:215.8px;width:490.5px;height:16.7px;background:#ececec;border-bottom:1px solid #e0e0e0"></div>
<svg class="a" style="left:54px;top:217px" width="12" height="12" viewBox="0 0 12 12"><circle cx="6.00" cy="6.15" r="2.9" fill="none" stroke="#555555" stroke-width="1.05"/><path d="M8.80 6.90L9.96 7.21M6.75 8.95L7.06 10.11M3.95 8.20L3.10 9.05M3.20 5.40L2.04 5.09M5.25 3.35L4.94 2.19M8.05 4.10L8.90 3.25" stroke="#555555" stroke-width="1.1"/><path d="M2.10 2.25L9.90 10.05" stroke="#555555" stroke-width="1.05"/></svg>
<div class="t" style="left:282.3px;top:219.15px;font-size:6.8px;line-height:10px;font-weight:700;color:#222;transform:scaleX(0.9477);transform-origin:left;">Indexes</div>
<div class="a" style="left:63.7px;top:231.5px;width:1px;height:66.6px;background:#ececec"></div>
<div class="a" style="left:133px;top:231.5px;width:1px;height:66.6px;background:#ececec"></div>
<div class="a" style="left:270.2px;top:231.5px;width:1px;height:66.6px;background:#ececec"></div>
<div class="a" style="left:324.1px;top:231.5px;width:1px;height:66.6px;background:#ececec"></div>
<div class="a" style="left:376.5px;top:231.5px;width:1px;height:66.6px;background:#ececec"></div>
<div class="a" style="left:413.5px;top:231.5px;width:1px;height:66.6px;background:#ececec"></div>
<div class="a" style="left:484.2px;top:231.5px;width:1px;height:66.6px;background:#ececec"></div>
<div class="a" style="left:518.9px;top:231.5px;width:1px;height:66.6px;background:#ececec"></div>
<div class="a" style="left:51.2px;top:245.7px;width:490.5px;height:1px;background:#e6e6e6"></div>
<div class="t" style="left:56.87px;top:234.1px;font-size:6.8px;line-height:10px;color:#444;">-</div>
<div class="t" style="left:67px;top:234.5px;font-size:6.8px;line-height:10px;font-weight:700;color:#222;transform:scaleX(0.9465);transform-origin:left;-webkit-text-stroke:0.12px #222;">Recommendation</div>
<svg class="a" style="left:124px;top:235px" width="9" height="9" viewBox="0 0 9 9"><g transform="translate(1.80 1.40)"><path d="M0 0H6.1V1.3L3.75 2.9V5.8H2.35V2.9L0 1.3Z" fill="#111"/></g></svg>
<div class="t" style="left:188.2px;top:234.5px;font-size:6.8px;line-height:10px;font-weight:700;color:#222;-webkit-text-stroke:0.12px #222;">Name</div>
<svg class="a" style="left:262px;top:235px" width="9" height="9" viewBox="0 0 9 9"><g transform="translate(1.30 1.40)"><path d="M0 0H6.1V1.3L3.75 2.9V5.8H2.35V2.9L0 1.3Z" fill="#111"/></g></svg>
<div class="t" style="left:286.3px;top:234.5px;font-size:6.8px;line-height:10px;font-weight:700;color:#222;transform:scaleX(0.9566);transform-origin:left;-webkit-text-stroke:0.12px #222;">Type</div>
<svg class="a" style="left:315px;top:235px" width="9" height="9" viewBox="0 0 9 9"><g transform="translate(1.80 1.40)"><path d="M0 0H6.1V1.3L3.75 2.9V5.8H2.35V2.9L0 1.3Z" fill="#111"/></g></svg>
<div class="t" style="left:327.6px;top:234.5px;font-size:6.8px;line-height:10px;font-weight:700;color:#222;transform:scaleX(0.9423);transform-origin:left;-webkit-text-stroke:0.12px #222;">Primary Key</div>
<svg class="a" style="left:368px;top:235px" width="9" height="9" viewBox="0 0 9 9"><g transform="translate(1.90 1.40)"><path d="M0 0H6.1V1.3L3.75 2.9V5.8H2.35V2.9L0 1.3Z" fill="#111"/></g></svg>
<div class="t" style="left:379.5px;top:234.5px;font-size:6.8px;line-height:10px;font-weight:700;color:#222;transform:scaleX(0.9764);transform-origin:left;-webkit-text-stroke:0.12px #222;">Unique</div>
<svg class="a" style="left:405px;top:235px" width="9" height="9" viewBox="0 0 9 9"><g transform="translate(1.00 1.40)"><path d="M0 0H6.1V1.3L3.75 2.9V5.8H2.35V2.9L0 1.3Z" fill="#111"/></g></svg>
<div class="t" style="left:416.3px;top:234.5px;font-size:6.8px;line-height:10px;font-weight:700;color:#222;transform:scaleX(0.9570);transform-origin:left;-webkit-text-stroke:0.12px #222;">Unique Constraint</div>
<svg class="a" style="left:476px;top:235px" width="9" height="9" viewBox="0 0 9 9"><g transform="translate(1.20 1.40)"><path d="M0 0H6.1V1.3L3.75 2.9V5.8H2.35V2.9L0 1.3Z" fill="#111"/></g></svg>
<div class="t" style="left:487.4px;top:234.5px;font-size:6.8px;line-height:10px;font-weight:700;color:#222;transform:scaleX(0.9171);transform-origin:left;-webkit-text-stroke:0.12px #222;">Fill Factor</div>
<div class="t" style="left:522.4px;top:234.5px;font-size:6.8px;line-height:10px;font-weight:700;color:#222;transform:scaleX(0.9164);transform-origin:left;-webkit-text-stroke:0.12px #222;">Disabl</div>
<div class="a" style="left:51.2px;top:259.05px;width:490.5px;height:1px;background:#efefef"></div>
<svg class="a" style="left:52px;top:248px" width="10" height="10" viewBox="0 0 10 10"><circle cx="5.7" cy="5.72" r="3.85" fill="#3db54a"/></svg>
<div class="t" style="left:67px;top:249.32px;font-size:7.4px;line-height:10px;color:#333;transform:scaleX(0.8584);transform-origin:left;-webkit-text-stroke:0.1px #333;">NONE</div>
<div class="t" style="left:135.5px;top:249.32px;font-size:7.4px;line-height:10px;color:#333;transform:scaleX(0.8423);transform-origin:left;-webkit-text-stroke:0.1px #333;">PK_Transactions</div>
<div class="t" style="left:273.5px;top:249.32px;font-size:7.4px;line-height:10px;color:#333;transform:scaleX(0.7804);transform-origin:left;-webkit-text-stroke:0.1px #333;">CLUSTERED</div>
<svg class="a" style="left:326px;top:248px" width="10" height="10" viewBox="0 0 10 10"><rect x="2.10" y="2.97" width="5.5" height="5.5" fill="#fff" stroke="#f0f0f0" stroke-width="1"/><rect x="3.25" y="4.17" width="3.2" height="3.1" fill="#1a1a1a"/></svg>
<svg class="a" style="left:379px;top:248px" width="10" height="10" viewBox="0 0 10 10"><rect x="1.50" y="2.97" width="5.5" height="5.5" fill="#fff" stroke="#f0f0f0" stroke-width="1"/><rect x="2.65" y="4.17" width="3.2" height="3.1" fill="#1a1a1a"/></svg>
<svg class="a" style="left:415px;top:248px" width="10" height="10" viewBox="0 0 10 10"><rect x="1.80" y="2.97" width="5.5" height="5.5" fill="#fff" stroke="#e4e4e4" stroke-width="1"/></svg>
<div class="t" style="left:487.8px;top:249.32px;font-size:7.4px;line-height:10px;color:#333;transform:scaleX(0.8784);transform-origin:left;-webkit-text-stroke:0.1px #333;">100</div>
<svg class="a" style="left:521px;top:248px" width="10" height="10" viewBox="0 0 10 10"><rect x="1.90" y="2.97" width="5.5" height="5.5" fill="#fff" stroke="#e4e4e4" stroke-width="1"/></svg>
<div class="a" style="left:51.2px;top:259.55px;width:490.5px;height:12.85px;background:#e9e9e9"></div>
<div class="a" style="left:51.2px;top:271.9px;width:490.5px;height:1px;background:#efefef"></div>
<svg class="a" style="left:52px;top:261px" width="10" height="10" viewBox="0 0 10 10"><circle cx="5.7" cy="5.57" r="3.85" fill="#3db54a"/></svg>
<div class="t" style="left:67px;top:262.18px;font-size:7.4px;line-height:10px;color:#333;transform:scaleX(0.8584);transform-origin:left;-webkit-text-stroke:0.1px #333;">NONE</div>
<div class="t" style="left:135.5px;top:262.18px;font-size:7.4px;line-height:10px;color:#333;transform:scaleX(0.8336);transform-origin:left;-webkit-text-stroke:0.1px #333;">IX_Transactions_FkMatchDataSetId_Status</div>
<div class="t" style="left:273.5px;top:262.18px;font-size:7.4px;line-height:10px;color:#333;transform:scaleX(0.7804);transform-origin:left;-webkit-text-stroke:0.1px #333;">NONCLUSTERED</div>
<svg class="a" style="left:326px;top:261px" width="10" height="10" viewBox="0 0 10 10"><rect x="2.10" y="2.82" width="5.5" height="5.5" fill="#fff" stroke="#e4e4e4" stroke-width="1"/></svg>
<svg class="a" style="left:379px;top:261px" width="10" height="10" viewBox="0 0 10 10"><rect x="1.50" y="2.82" width="5.5" height="5.5" fill="#fff" stroke="#e4e4e4" stroke-width="1"/></svg>
<svg class="a" style="left:415px;top:261px" width="10" height="10" viewBox="0 0 10 10"><rect x="1.80" y="2.82" width="5.5" height="5.5" fill="#fff" stroke="#e4e4e4" stroke-width="1"/></svg>
<div class="t" style="left:487.8px;top:262.18px;font-size:7.4px;line-height:10px;color:#333;transform:scaleX(0.8784);transform-origin:left;-webkit-text-stroke:0.1px #333;">100</div>
<svg class="a" style="left:521px;top:261px" width="10" height="10" viewBox="0 0 10 10"><rect x="1.90" y="2.82" width="5.5" height="5.5" fill="#fff" stroke="#e4e4e4" stroke-width="1"/></svg>
<div class="a" style="left:51.2px;top:284.75px;width:490.5px;height:1px;background:#efefef"></div>
<svg class="a" style="left:52px;top:274px" width="10" height="10" viewBox="0 0 10 10"><circle cx="5.7" cy="5.42" r="3.85" fill="#3db54a"/></svg>
<div class="t" style="left:67px;top:275.02px;font-size:7.4px;line-height:10px;color:#333;transform:scaleX(0.8584);transform-origin:left;-webkit-text-stroke:0.1px #333;">NONE</div>
<div class="t" style="left:135.5px;top:275.02px;font-size:7.4px;line-height:10px;color:#333;transform:scaleX(0.8345);transform-origin:left;-webkit-text-stroke:0.1px #333;">IX_Transactions_FkMatchId</div>
<div class="t" style="left:273.5px;top:275.02px;font-size:7.4px;line-height:10px;color:#333;transform:scaleX(0.7804);transform-origin:left;-webkit-text-stroke:0.1px #333;">NONCLUSTERED</div>
<svg class="a" style="left:326px;top:274px" width="10" height="10" viewBox="0 0 10 10"><rect x="2.10" y="2.67" width="5.5" height="5.5" fill="#fff" stroke="#e4e4e4" stroke-width="1"/></svg>
<svg class="a" style="left:379px;top:274px" width="10" height="10" viewBox="0 0 10 10"><rect x="1.50" y="2.67" width="5.5" height="5.5" fill="#fff" stroke="#e4e4e4" stroke-width="1"/></svg>
<svg class="a" style="left:415px;top:274px" width="10" height="10" viewBox="0 0 10 10"><rect x="1.80" y="2.67" width="5.5" height="5.5" fill="#fff" stroke="#e4e4e4" stroke-width="1"/></svg>
<div class="t" style="left:487.8px;top:275.02px;font-size:7.4px;line-height:10px;color:#333;transform:scaleX(0.8784);transform-origin:left;-webkit-text-stroke:0.1px #333;">100</div>
<svg class="a" style="left:521px;top:274px" width="10" height="10" viewBox="0 0 10 10"><rect x="1.90" y="2.67" width="5.5" height="5.5" fill="#fff" stroke="#e4e4e4" stroke-width="1"/></svg>
<div class="a" style="left:51.2px;top:297.6px;width:490.5px;height:1px;background:#efefef"></div>
<svg class="a" style="left:52px;top:287px" width="10" height="10" viewBox="0 0 10 10"><circle cx="5.7" cy="5.27" r="3.85" fill="#3db54a"/></svg>
<div class="t" style="left:67px;top:287.88px;font-size:7.4px;line-height:10px;color:#333;transform:scaleX(0.8584);transform-origin:left;-webkit-text-stroke:0.1px #333;">NONE</div>
<div class="t" style="left:135.5px;top:287.88px;font-size:7.4px;line-height:10px;color:#333;transform:scaleX(0.8453);transform-origin:left;-webkit-text-stroke:0.1px #333;">IX_Transactions_FkTransactionSourceId_Status</div>
<div class="t" style="left:273.5px;top:287.88px;font-size:7.4px;line-height:10px;color:#333;transform:scaleX(0.7804);transform-origin:left;-webkit-text-stroke:0.1px #333;">NONCLUSTERED</div>
<svg class="a" style="left:326px;top:287px" width="10" height="10" viewBox="0 0 10 10"><rect x="2.10" y="2.52" width="5.5" height="5.5" fill="#fff" stroke="#e4e4e4" stroke-width="1"/></svg>
<svg class="a" style="left:379px;top:287px" width="10" height="10" viewBox="0 0 10 10"><rect x="1.50" y="2.52" width="5.5" height="5.5" fill="#fff" stroke="#e4e4e4" stroke-width="1"/></svg>
<svg class="a" style="left:415px;top:287px" width="10" height="10" viewBox="0 0 10 10"><rect x="1.80" y="2.52" width="5.5" height="5.5" fill="#fff" stroke="#e4e4e4" stroke-width="1"/></svg>
<div class="t" style="left:487.8px;top:287.88px;font-size:7.4px;line-height:10px;color:#333;transform:scaleX(0.8784);transform-origin:left;-webkit-text-stroke:0.1px #333;">100</div>
<svg class="a" style="left:521px;top:287px" width="10" height="10" viewBox="0 0 10 10"><rect x="1.90" y="2.52" width="5.5" height="5.5" fill="#fff" stroke="#e4e4e4" stroke-width="1"/></svg>
<svg class="a" style="left:52px;top:321px" width="6" height="6" viewBox="0 0 6 6"><path d="M4.2 1.3L1.8 2.8L4.2 4.3Z" fill="#222"/></svg>
<svg class="a" style="left:535px;top:321px" width="6" height="6" viewBox="0 0 6 6"><path d="M1.8 1.3L4.2 2.8L1.8 4.3Z" fill="#222"/></svg>
<div class="a" style="left:57.8px;top:323px;width:262.2px;height:2px;background:#e6e6e6"></div>
<div class="a" style="left:547.9px;top:214.9px;width:244.1px;height:113.1px;border:1px solid #e0e0e0;background:#fff"></div>
<div class="a" style="left:548.9px;top:215.9px;width:242.1px;height:16.5px;background:#ececec;border-bottom:1px solid #e0e0e0"></div>
<svg class="a" style="left:551px;top:217px" width="12" height="12" viewBox="0 0 12 12"><circle cx="6.70" cy="6.15" r="2.9" fill="none" stroke="#a6a6a6" stroke-width="1.05"/><path d="M9.50 6.90L10.66 7.21M7.45 8.95L7.76 10.11M4.65 8.20L3.80 9.05M3.90 5.40L2.74 5.09M5.95 3.35L5.64 2.19M8.75 4.10L9.60 3.25" stroke="#a6a6a6" stroke-width="1.1"/><path d="M2.80 2.25L10.60 10.05" stroke="#a6a6a6" stroke-width="1.05"/></svg>
<div class="t" style="left:654.2px;top:219.15px;font-size:6.8px;line-height:10px;font-weight:700;color:#222;transform:scaleX(0.9282);transform-origin:left;">Columns</div>
<div class="a" style="left:618.2px;top:231.4px;width:1px;height:94.8px;background:#ececec"></div>
<div class="a" style="left:655.1px;top:231.4px;width:1px;height:94.8px;background:#ececec"></div>
<div class="a" style="left:696.5px;top:231.4px;width:1px;height:94.8px;background:#ececec"></div>
<div class="a" style="left:746.9px;top:231.4px;width:1px;height:94.8px;background:#ececec"></div>
<div class="a" style="left:548.9px;top:246px;width:236.4px;height:1px;background:#e6e6e6"></div>
<div class="t" style="left:569.5px;top:234.6px;font-size:6.8px;line-height:10px;font-weight:700;color:#222;transform:scaleX(0.9881);transform-origin:left;-webkit-text-stroke:0.12px #222;">Name</div>
<svg class="a" style="left:610px;top:235px" width="9" height="9" viewBox="0 0 9 9"><g transform="translate(1.20 1.50)"><path d="M0 0H6.1V1.3L3.75 2.9V5.8H2.35V2.9L0 1.3Z" fill="#111"/></g></svg>
<div class="t" style="left:621.2px;top:234.6px;font-size:6.8px;line-height:10px;font-weight:700;color:#222;transform:scaleX(0.9579);transform-origin:left;-webkit-text-stroke:0.12px #222;">Ordinal</div>
<svg class="a" style="left:647px;top:235px" width="9" height="9" viewBox="0 0 9 9"><g transform="translate(1.00 1.50)"><path d="M0 0H6.1V1.3L3.75 2.9V5.8H2.35V2.9L0 1.3Z" fill="#111"/></g></svg>
<div class="t" style="left:658.9px;top:234.6px;font-size:6.8px;line-height:10px;font-weight:700;color:#222;transform:scaleX(0.9336);transform-origin:left;-webkit-text-stroke:0.12px #222;">Included</div>
<svg class="a" style="left:688px;top:235px" width="9" height="9" viewBox="0 0 9 9"><g transform="translate(1.70 1.50)"><path d="M0 0H6.1V1.3L3.75 2.9V5.8H2.35V2.9L0 1.3Z" fill="#111"/></g></svg>
<div class="t" style="left:699.8px;top:234.6px;font-size:6.8px;line-height:10px;font-weight:700;color:#222;transform:scaleX(0.9340);transform-origin:left;-webkit-text-stroke:0.12px #222;">Descending</div>
<svg class="a" style="left:739px;top:235px" width="9" height="9" viewBox="0 0 9 9"><g transform="translate(1.40 1.50)"><path d="M0 0H6.1V1.3L3.75 2.9V5.8H2.35V2.9L0 1.3Z" fill="#111"/></g></svg>
<div class="a" style="left:548.9px;top:259.3px;width:236.4px;height:1px;background:#efefef"></div>
<div class="t" style="left:550.9px;top:249.1px;font-size:7.4px;line-height:10px;color:#333;transform:scaleX(0.8491);transform-origin:left;-webkit-text-stroke:0.1px #333;">FkMatchDataSetId</div>
<div class="t" style="left:648.68px;top:249.1px;font-size:7.4px;line-height:10px;color:#333;transform:scaleX(0.8784);transform-origin:right;-webkit-text-stroke:0.1px #333;">1</div>
<svg class="a" style="left:658px;top:249px" width="10" height="10" viewBox="0 0 10 10"><rect x="1.70" y="2.25" width="5.5" height="5.5" fill="#fff" stroke="#e4e4e4" stroke-width="1"/></svg>
<svg class="a" style="left:698px;top:249px" width="10" height="10" viewBox="0 0 10 10"><rect x="2.30" y="2.25" width="5.5" height="5.5" fill="#fff" stroke="#e4e4e4" stroke-width="1"/></svg>
<div class="a" style="left:548.9px;top:272.1px;width:236.4px;height:1px;background:#efefef"></div>
<div class="t" style="left:550.9px;top:261.9px;font-size:7.4px;line-height:10px;color:#333;transform:scaleX(0.8645);transform-origin:left;-webkit-text-stroke:0.1px #333;">Status</div>
<div class="t" style="left:648.68px;top:261.9px;font-size:7.4px;line-height:10px;color:#333;transform:scaleX(0.8784);transform-origin:right;-webkit-text-stroke:0.1px #333;">2</div>
<svg class="a" style="left:658px;top:261px" width="10" height="10" viewBox="0 0 10 10"><rect x="1.70" y="3.05" width="5.5" height="5.5" fill="#fff" stroke="#e4e4e4" stroke-width="1"/></svg>
<svg class="a" style="left:698px;top:261px" width="10" height="10" viewBox="0 0 10 10"><rect x="2.30" y="3.05" width="5.5" height="5.5" fill="#fff" stroke="#e4e4e4" stroke-width="1"/></svg>
<div class="a" style="left:548.9px;top:284.9px;width:236.4px;height:1px;background:#efefef"></div>
<div class="t" style="left:550.9px;top:274.7px;font-size:7.4px;line-height:10px;color:#333;transform:scaleX(0.8797);transform-origin:left;-webkit-text-stroke:0.1px #333;">TransactionId</div>
<div class="t" style="left:648.68px;top:274.7px;font-size:7.4px;line-height:10px;color:#333;transform:scaleX(0.8784);transform-origin:right;-webkit-text-stroke:0.1px #333;">0</div>
<svg class="a" style="left:658px;top:274px" width="10" height="10" viewBox="0 0 10 10"><rect x="1.70" y="2.85" width="5.5" height="5.5" fill="#fff" stroke="#f0f0f0" stroke-width="1"/><rect x="2.85" y="4.05" width="3.2" height="3.1" fill="#1a1a1a"/></svg>
<svg class="a" style="left:698px;top:274px" width="10" height="10" viewBox="0 0 10 10"><rect x="2.30" y="2.85" width="5.5" height="5.5" fill="#fff" stroke="#e4e4e4" stroke-width="1"/></svg>
<div class="a" style="left:548.9px;top:297.7px;width:236.4px;height:1px;background:#efefef"></div>
<div class="t" style="left:550.9px;top:287.5px;font-size:7.4px;line-height:10px;color:#333;transform:scaleX(0.8705);transform-origin:left;-webkit-text-stroke:0.1px #333;">FkTransactionSourceId</div>
<div class="t" style="left:648.68px;top:287.5px;font-size:7.4px;line-height:10px;color:#333;transform:scaleX(0.8784);transform-origin:right;-webkit-text-stroke:0.1px #333;">0</div>
<svg class="a" style="left:658px;top:287px" width="10" height="10" viewBox="0 0 10 10"><rect x="1.70" y="2.65" width="5.5" height="5.5" fill="#fff" stroke="#f0f0f0" stroke-width="1"/><rect x="2.85" y="3.85" width="3.2" height="3.1" fill="#1a1a1a"/></svg>
<svg class="a" style="left:698px;top:287px" width="10" height="10" viewBox="0 0 10 10"><rect x="2.30" y="2.65" width="5.5" height="5.5" fill="#fff" stroke="#e4e4e4" stroke-width="1"/></svg>
<div class="a" style="left:548.9px;top:310.5px;width:236.4px;height:1px;background:#efefef"></div>
<div class="t" style="left:550.9px;top:300.3px;font-size:7.4px;line-height:10px;color:#333;transform:scaleX(0.8537);transform-origin:left;-webkit-text-stroke:0.1px #333;">StatusBy</div>
<div class="t" style="left:648.68px;top:300.3px;font-size:7.4px;line-height:10px;color:#333;transform:scaleX(0.8784);transform-origin:right;-webkit-text-stroke:0.1px #333;">0</div>
<svg class="a" style="left:658px;top:300px" width="10" height="10" viewBox="0 0 10 10"><rect x="1.70" y="2.45" width="5.5" height="5.5" fill="#fff" stroke="#f0f0f0" stroke-width="1"/><rect x="2.85" y="3.65" width="3.2" height="3.1" fill="#1a1a1a"/></svg>
<svg class="a" style="left:698px;top:300px" width="10" height="10" viewBox="0 0 10 10"><rect x="2.30" y="2.45" width="5.5" height="5.5" fill="#fff" stroke="#e4e4e4" stroke-width="1"/></svg>
<div class="a" style="left:548.9px;top:323.3px;width:236.4px;height:1px;background:#efefef"></div>
<div class="t" style="left:550.9px;top:313.1px;font-size:7.4px;line-height:10px;color:#333;transform:scaleX(0.8595);transform-origin:left;-webkit-text-stroke:0.1px #333;">StatusDate</div>
<div class="t" style="left:648.68px;top:313.1px;font-size:7.4px;line-height:10px;color:#333;transform:scaleX(0.8784);transform-origin:right;-webkit-text-stroke:0.1px #333;">0</div>
<svg class="a" style="left:658px;top:312px" width="10" height="10" viewBox="0 0 10 10"><rect x="1.70" y="3.25" width="5.5" height="5.5" fill="#fff" stroke="#f0f0f0" stroke-width="1"/><rect x="2.85" y="4.45" width="3.2" height="3.1" fill="#1a1a1a"/></svg>
<svg class="a" style="left:698px;top:312px" width="10" height="10" viewBox="0 0 10 10"><rect x="2.30" y="3.25" width="5.5" height="5.5" fill="#fff" stroke="#e4e4e4" stroke-width="1"/></svg>
<svg class="a" style="left:785px;top:232px" width="6" height="6" viewBox="0 0 6 6"><path d="M1.40 4.20L3.00 1.80L4.60 4.20Z" fill="#222"/></svg>
<svg class="a" style="left:785px;top:320px" width="6" height="6" viewBox="0 0 6 6"><path d="M1.40 2.60L3.00 5.00L4.60 2.60Z" fill="#222"/></svg>
<div class="a" style="left:787px;top:237px;width:2px;height:43.5px;background:#e6e6e6"></div>
<svg class="a" style="left:50px;top:332px" width="44" height="14" viewBox="0 0 44 14"><rect x="1" y="1.6" width="41.2" height="10.3" fill="#fff" stroke="#3c72f2" stroke-width="1.4"/></svg>
<div class="t" style="left:57.01px;top:333.95px;font-size:6.4px;line-height:10px;color:#4a6cf0;transform:scaleX(0.9160);transform-origin:center;">Update All</div>
<svg class="a" style="left:97px;top:332px" width="44" height="14" viewBox="0 0 44 14"><rect x="1.4" y="1.6" width="40.8" height="10.3" fill="#fff" stroke="#3c72f2" stroke-width="1.4"/></svg>
<div class="t" style="left:108.48px;top:333.95px;font-size:6.4px;line-height:10px;color:#4a6cf0;transform:scaleX(0.9160);transform-origin:center;">Update</div>
<div class="a" style="left:50.3px;top:350.3px;width:741.3px;height:112.7px;border:1px solid #e0e0e0;background:#fff"></div>
<div class="a" style="left:51.3px;top:351.3px;width:739.3px;height:16.1px;background:#ececec;border-bottom:1px solid #e0e0e0"></div>
<svg class="a" style="left:54px;top:352px" width="12" height="12" viewBox="0 0 12 12"><circle cx="6.10" cy="6.35" r="2.9" fill="none" stroke="#a6a6a6" stroke-width="1.05"/><path d="M8.90 7.10L10.06 7.41M6.85 9.15L7.16 10.31M4.05 8.40L3.20 9.25M3.30 5.60L2.14 5.29M5.35 3.55L5.04 2.39M8.15 4.30L9.00 3.45" stroke="#a6a6a6" stroke-width="1.1"/><path d="M2.20 2.45L10.00 10.25" stroke="#a6a6a6" stroke-width="1.05"/></svg>
<div class="t" style="left:404.8px;top:354.35px;font-size:6.8px;line-height:10px;font-weight:700;color:#222;transform:scaleX(0.9128);transform-origin:left;">Statistics</div>
<div class="a" style="left:63.3px;top:366.4px;width:1px;height:95px;background:#ececec"></div>
<div class="a" style="left:157.7px;top:366.4px;width:1px;height:95px;background:#ececec"></div>
<div class="a" style="left:227.8px;top:366.4px;width:1px;height:95px;background:#ececec"></div>
<div class="a" style="left:301.3px;top:366.4px;width:1px;height:95px;background:#ececec"></div>
<div class="a" style="left:337px;top:366.4px;width:1px;height:95px;background:#ececec"></div>
<div class="a" style="left:397.3px;top:366.4px;width:1px;height:95px;background:#ececec"></div>
<div class="a" style="left:478.2px;top:366.4px;width:1px;height:95px;background:#ececec"></div>
<div class="a" style="left:542.3px;top:366.4px;width:1px;height:95px;background:#ececec"></div>
<div class="a" style="left:611.3px;top:366.4px;width:1px;height:95px;background:#ececec"></div>
<div class="a" style="left:51.3px;top:381.8px;width:733.7px;height:1px;background:#e6e6e6"></div>
<div class="t" style="left:56.67px;top:369.6px;font-size:6.8px;line-height:10px;color:#444;">-</div>
<div class="t" style="left:97.7px;top:370px;font-size:6.8px;line-height:10px;font-weight:700;color:#222;-webkit-text-stroke:0.12px #222;">Name</div>
<svg class="a" style="left:149px;top:370px" width="9" height="9" viewBox="0 0 9 9"><g transform="translate(1.80 1.90)"><path d="M0 0H6.1V1.3L3.75 2.9V5.8H2.35V2.9L0 1.3Z" fill="#111"/></g></svg>
<div class="t" style="left:177.1px;top:370px;font-size:6.8px;line-height:10px;font-weight:700;color:#222;transform:scaleX(0.9325);transform-origin:left;-webkit-text-stroke:0.12px #222;">Column</div>
<svg class="a" style="left:220px;top:370px" width="9" height="9" viewBox="0 0 9 9"><g transform="translate(1.00 1.90)"><path d="M0 0H6.1V1.3L3.75 2.9V5.8H2.35V2.9L0 1.3Z" fill="#111"/></g></svg>
<div class="t" style="left:239.8px;top:370px;font-size:6.8px;line-height:10px;font-weight:700;color:#222;transform:scaleX(0.9449);transform-origin:left;-webkit-text-stroke:0.12px #222;">Last Updated</div>
<svg class="a" style="left:292px;top:370px" width="9" height="9" viewBox="0 0 9 9"><g transform="translate(1.50 1.90)"><path d="M0 0H6.1V1.3L3.75 2.9V5.8H2.35V2.9L0 1.3Z" fill="#111"/></g></svg>
<div class="t" style="left:306.8px;top:370px;font-size:6.8px;line-height:10px;font-weight:700;color:#222;transform:scaleX(0.8988);transform-origin:left;-webkit-text-stroke:0.12px #222;">Rows</div>
<svg class="a" style="left:329px;top:370px" width="9" height="9" viewBox="0 0 9 9"><g transform="translate(1.00 1.90)"><path d="M0 0H6.1V1.3L3.75 2.9V5.8H2.35V2.9L0 1.3Z" fill="#111"/></g></svg>
<div class="t" style="left:340.5px;top:370px;font-size:6.8px;line-height:10px;font-weight:700;color:#222;transform:scaleX(0.9242);transform-origin:left;-webkit-text-stroke:0.12px #222;">Rows Sampled</div>
<svg class="a" style="left:389px;top:370px" width="9" height="9" viewBox="0 0 9 9"><g transform="translate(1.20 1.90)"><path d="M0 0H6.1V1.3L3.75 2.9V5.8H2.35V2.9L0 1.3Z" fill="#111"/></g></svg>
<div class="t" style="left:400.3px;top:370px;font-size:6.8px;line-height:10px;font-weight:700;color:#222;transform:scaleX(0.9780);transform-origin:left;-webkit-text-stroke:0.12px #222;">Modification Counter</div>
<svg class="a" style="left:470px;top:370px" width="9" height="9" viewBox="0 0 9 9"><g transform="translate(1.00 1.90)"><path d="M0 0H6.1V1.3L3.75 2.9V5.8H2.35V2.9L0 1.3Z" fill="#111"/></g></svg>
<div class="t" style="left:482px;top:370px;font-size:6.8px;line-height:10px;font-weight:700;color:#222;transform:scaleX(0.9467);transform-origin:left;-webkit-text-stroke:0.12px #222;">Unfiltered Rows</div>
<svg class="a" style="left:534px;top:370px" width="9" height="9" viewBox="0 0 9 9"><g transform="translate(1.20 1.90)"><path d="M0 0H6.1V1.3L3.75 2.9V5.8H2.35V2.9L0 1.3Z" fill="#111"/></g></svg>
<div class="t" style="left:545.8px;top:370px;font-size:6.8px;line-height:10px;font-weight:700;color:#222;transform:scaleX(0.9500);transform-origin:left;-webkit-text-stroke:0.12px #222;">Recommendation</div>
<svg class="a" style="left:603px;top:370px" width="9" height="9" viewBox="0 0 9 9"><g transform="translate(1.30 1.90)"><path d="M0 0H6.1V1.3L3.75 2.9V5.8H2.35V2.9L0 1.3Z" fill="#111"/></g></svg>
<div class="a" style="left:51.3px;top:395px;width:733.7px;height:1px;background:#efefef"></div>
<svg class="a" style="left:52px;top:384px" width="10" height="10" viewBox="0 0 10 10"><circle cx="5.8" cy="5.75" r="3.85" fill="#3db54a"/></svg>
<div class="t" style="left:66.7px;top:385.35px;font-size:7.4px;line-height:10px;color:#333;transform:scaleX(0.8008);transform-origin:left;-webkit-text-stroke:0.1px #333;">_WA_Sys_00000003_5E218BCD</div>
<div class="t" style="left:161.3px;top:385.35px;font-size:7.4px;line-height:10px;color:#333;transform:scaleX(0.8491);transform-origin:left;-webkit-text-stroke:0.1px #333;">FkMatchDataSetId</div>
<div class="t" style="left:231.7px;top:385.35px;font-size:7.4px;line-height:10px;color:#333;transform:scaleX(0.8875);transform-origin:left;-webkit-text-stroke:0.1px #333;">6/4/2025 10:52:37 AM</div>
<div class="t" style="left:298.26px;top:385.35px;font-size:7.4px;line-height:10px;color:#333;transform:scaleX(0.8431);transform-origin:right;-webkit-text-stroke:0.1px #333;">76,100,000</div>
<div class="t" style="left:368.05px;top:385.35px;font-size:7.4px;line-height:10px;color:#333;transform:scaleX(0.8540);transform-origin:right;-webkit-text-stroke:0.1px #333;">932,198</div>
<div class="t" style="left:443.38px;top:385.35px;font-size:7.4px;line-height:10px;color:#333;transform:scaleX(0.8387);transform-origin:right;-webkit-text-stroke:0.1px #333;">7,482,939</div>
<div class="t" style="left:503.76px;top:385.35px;font-size:7.4px;line-height:10px;color:#333;transform:scaleX(0.8431);transform-origin:right;-webkit-text-stroke:0.1px #333;">76,100,000</div>
<div class="t" style="left:545.8px;top:385.35px;font-size:7.4px;line-height:10px;color:#333;transform:scaleX(0.8584);transform-origin:left;-webkit-text-stroke:0.1px #333;">NONE</div>
<div class="a" style="left:51.3px;top:407.7px;width:733.7px;height:1px;background:#efefef"></div>
<svg class="a" style="left:52px;top:397px" width="10" height="10" viewBox="0 0 10 10"><circle cx="5.8" cy="5.45" r="3.85" fill="#3db54a"/></svg>
<div class="t" style="left:66.7px;top:398.05px;font-size:7.4px;line-height:10px;color:#333;transform:scaleX(0.8008);transform-origin:left;-webkit-text-stroke:0.1px #333;">_WA_Sys_00000007_5E218BCD</div>
<div class="t" style="left:161.3px;top:398.05px;font-size:7.4px;line-height:10px;color:#333;transform:scaleX(0.8515);transform-origin:left;-webkit-text-stroke:0.1px #333;">StatusWtk</div>
<div class="t" style="left:231.7px;top:398.05px;font-size:7.4px;line-height:10px;color:#333;transform:scaleX(0.8875);transform-origin:left;-webkit-text-stroke:0.1px #333;">6/12/2025 9:36:28 AM</div>
<div class="t" style="left:298.26px;top:398.05px;font-size:7.4px;line-height:10px;color:#333;transform:scaleX(0.8431);transform-origin:right;-webkit-text-stroke:0.1px #333;">76,100,000</div>
<div class="t" style="left:368.05px;top:398.05px;font-size:7.4px;line-height:10px;color:#333;transform:scaleX(0.8540);transform-origin:right;-webkit-text-stroke:0.1px #333;">930,016</div>
<div class="t" style="left:443.38px;top:398.05px;font-size:7.4px;line-height:10px;color:#333;transform:scaleX(0.8387);transform-origin:right;-webkit-text-stroke:0.1px #333;">7,470,203</div>
<div class="t" style="left:503.76px;top:398.05px;font-size:7.4px;line-height:10px;color:#333;transform:scaleX(0.8431);transform-origin:right;-webkit-text-stroke:0.1px #333;">76,100,000</div>
<div class="t" style="left:545.8px;top:398.05px;font-size:7.4px;line-height:10px;color:#333;transform:scaleX(0.8584);transform-origin:left;-webkit-text-stroke:0.1px #333;">NONE</div>
<div class="a" style="left:51.3px;top:420.4px;width:733.7px;height:1px;background:#efefef"></div>
<svg class="a" style="left:52px;top:410px" width="10" height="10" viewBox="0 0 10 10"><circle cx="5.8" cy="5.15" r="3.85" fill="#3db54a"/></svg>
<div class="t" style="left:66.7px;top:410.75px;font-size:7.4px;line-height:10px;color:#333;transform:scaleX(0.8008);transform-origin:left;-webkit-text-stroke:0.1px #333;">_WA_Sys_00000005_5E218BCD</div>
<div class="t" style="left:161.3px;top:410.75px;font-size:7.4px;line-height:10px;color:#333;transform:scaleX(0.8537);transform-origin:left;-webkit-text-stroke:0.1px #333;">StatusBy</div>
<div class="t" style="left:231.7px;top:410.75px;font-size:7.4px;line-height:10px;color:#333;transform:scaleX(0.8875);transform-origin:left;-webkit-text-stroke:0.1px #333;">6/12/2025 9:36:28 AM</div>
<div class="t" style="left:298.26px;top:410.75px;font-size:7.4px;line-height:10px;color:#333;transform:scaleX(0.8431);transform-origin:right;-webkit-text-stroke:0.1px #333;">76,100,000</div>
<div class="t" style="left:368.05px;top:410.75px;font-size:7.4px;line-height:10px;color:#333;transform:scaleX(0.8540);transform-origin:right;-webkit-text-stroke:0.1px #333;">930,016</div>
<div class="t" style="left:443.38px;top:410.75px;font-size:7.4px;line-height:10px;color:#333;transform:scaleX(0.8387);transform-origin:right;-webkit-text-stroke:0.1px #333;">7,470,205</div>
<div class="t" style="left:503.76px;top:410.75px;font-size:7.4px;line-height:10px;color:#333;transform:scaleX(0.8431);transform-origin:right;-webkit-text-stroke:0.1px #333;">76,100,000</div>
<div class="t" style="left:545.8px;top:410.75px;font-size:7.4px;line-height:10px;color:#333;transform:scaleX(0.8584);transform-origin:left;-webkit-text-stroke:0.1px #333;">NONE</div>
<div class="a" style="left:51.3px;top:433.1px;width:733.7px;height:1px;background:#efefef"></div>
<svg class="a" style="left:52px;top:422px" width="10" height="10" viewBox="0 0 10 10"><circle cx="5.8" cy="5.85" r="3.85" fill="#3db54a"/></svg>
<div class="t" style="left:66.7px;top:423.45px;font-size:7.4px;line-height:10px;color:#333;transform:scaleX(0.8008);transform-origin:left;-webkit-text-stroke:0.1px #333;">_WA_Sys_00000006_5E218BCD</div>
<div class="t" style="left:161.3px;top:423.45px;font-size:7.4px;line-height:10px;color:#333;transform:scaleX(0.8595);transform-origin:left;-webkit-text-stroke:0.1px #333;">StatusDate</div>
<div class="t" style="left:231.7px;top:423.45px;font-size:7.4px;line-height:10px;color:#333;transform:scaleX(0.8875);transform-origin:left;-webkit-text-stroke:0.1px #333;">6/12/2025 9:36:29 AM</div>
<div class="t" style="left:298.26px;top:423.45px;font-size:7.4px;line-height:10px;color:#333;transform:scaleX(0.8431);transform-origin:right;-webkit-text-stroke:0.1px #333;">76,100,000</div>
<div class="t" style="left:368.05px;top:423.45px;font-size:7.4px;line-height:10px;color:#333;transform:scaleX(0.8540);transform-origin:right;-webkit-text-stroke:0.1px #333;">930,016</div>
<div class="t" style="left:443.38px;top:423.45px;font-size:7.4px;line-height:10px;color:#333;transform:scaleX(0.8387);transform-origin:right;-webkit-text-stroke:0.1px #333;">7,470,205</div>
<div class="t" style="left:503.76px;top:423.45px;font-size:7.4px;line-height:10px;color:#333;transform:scaleX(0.8431);transform-origin:right;-webkit-text-stroke:0.1px #333;">76,100,000</div>
<div class="t" style="left:545.8px;top:423.45px;font-size:7.4px;line-height:10px;color:#333;transform:scaleX(0.8584);transform-origin:left;-webkit-text-stroke:0.1px #333;">NONE</div>
<div class="a" style="left:51.3px;top:445.8px;width:733.7px;height:1px;background:#efefef"></div>
<svg class="a" style="left:52px;top:435px" width="10" height="10" viewBox="0 0 10 10"><circle cx="5.8" cy="5.55" r="3.85" fill="#3db54a"/></svg>
<div class="t" style="left:66.7px;top:436.15px;font-size:7.4px;line-height:10px;color:#333;transform:scaleX(0.8008);transform-origin:left;-webkit-text-stroke:0.1px #333;">_WA_Sys_00000002_5E218BCD</div>
<div class="t" style="left:161.3px;top:436.15px;font-size:7.4px;line-height:10px;color:#333;transform:scaleX(0.8705);transform-origin:left;-webkit-text-stroke:0.1px #333;">FkTransactionSourceId</div>
<div class="t" style="left:231.7px;top:436.15px;font-size:7.4px;line-height:10px;color:#333;transform:scaleX(0.8865);transform-origin:left;-webkit-text-stroke:0.1px #333;">6/23/2025 10:14:16 PM</div>
<div class="t" style="left:298.26px;top:436.15px;font-size:7.4px;line-height:10px;color:#333;transform:scaleX(0.8431);transform-origin:right;-webkit-text-stroke:0.1px #333;">76,099,999</div>
<div class="t" style="left:368.6px;top:436.15px;font-size:7.4px;line-height:10px;color:#333;transform:scaleX(0.8719);transform-origin:right;-webkit-text-stroke:0.1px #333;">931,112</div>
<div class="t" style="left:443.38px;top:436.15px;font-size:7.4px;line-height:10px;color:#333;transform:scaleX(0.8387);transform-origin:right;-webkit-text-stroke:0.1px #333;">7,403,981</div>
<div class="t" style="left:503.76px;top:436.15px;font-size:7.4px;line-height:10px;color:#333;transform:scaleX(0.8431);transform-origin:right;-webkit-text-stroke:0.1px #333;">76,099,999</div>
<div class="t" style="left:545.8px;top:436.15px;font-size:7.4px;line-height:10px;color:#333;transform:scaleX(0.8584);transform-origin:left;-webkit-text-stroke:0.1px #333;">NONE</div>
<div class="a" style="left:51.3px;top:458.5px;width:733.7px;height:1px;background:#efefef"></div>
<svg class="a" style="left:52px;top:448px" width="10" height="10" viewBox="0 0 10 10"><circle cx="5.8" cy="5.25" r="3.85" fill="#3db54a"/></svg>
<div class="t" style="left:66.7px;top:448.85px;font-size:7.4px;line-height:10px;color:#333;transform:scaleX(0.8008);transform-origin:left;-webkit-text-stroke:0.1px #333;">_WA_Sys_00000008_5E218BCD</div>
<div class="t" style="left:161.3px;top:448.85px;font-size:7.4px;line-height:10px;color:#333;transform:scaleX(0.8574);transform-origin:left;-webkit-text-stroke:0.1px #333;">FkReasonCodeId</div>
<div class="t" style="left:231.7px;top:448.85px;font-size:7.4px;line-height:10px;color:#333;transform:scaleX(0.8943);transform-origin:left;-webkit-text-stroke:0.1px #333;">8/8/2025 11:56:41 AM</div>
<div class="t" style="left:298.26px;top:448.85px;font-size:7.4px;line-height:10px;color:#333;transform:scaleX(0.8431);transform-origin:right;-webkit-text-stroke:0.1px #333;">74,330,758</div>
<div class="t" style="left:368.05px;top:448.85px;font-size:7.4px;line-height:10px;color:#333;transform:scaleX(0.8540);transform-origin:right;-webkit-text-stroke:0.1px #333;">930,579</div>
<div class="t" style="left:443.38px;top:448.85px;font-size:7.4px;line-height:10px;color:#333;transform:scaleX(0.8387);transform-origin:right;-webkit-text-stroke:0.1px #333;">5,624,733</div>
<div class="t" style="left:503.76px;top:448.85px;font-size:7.4px;line-height:10px;color:#333;transform:scaleX(0.8431);transform-origin:right;-webkit-text-stroke:0.1px #333;">74,330,758</div>
<div class="t" style="left:545.8px;top:448.85px;font-size:7.4px;line-height:10px;color:#333;transform:scaleX(0.8584);transform-origin:left;-webkit-text-stroke:0.1px #333;">NONE</div>
<svg class="a" style="left:785px;top:367px" width="6" height="6" viewBox="0 0 6 6"><path d="M1.40 4.80L3.00 2.40L4.60 4.80Z" fill="#222"/></svg>
<svg class="a" style="left:785px;top:456px" width="6" height="6" viewBox="0 0 6 6"><path d="M1.40 2.10L3.00 4.50L4.60 2.10Z" fill="#222"/></svg>
<div class="a" style="left:787px;top:373.2px;width:2px;height:36.4px;background:#e6e6e6"></div>
<div class="a" style="left:1px;top:466.3px;width:796px;height:1.7px;background:#ececec"></div>
<div class="a" style="left:0px;top:0px;width:1.2px;height:468px;background:#000"></div>
<div class="a" style="left:796px;top:33px;width:1px;height:435px;background:#f3f3f3"></div>
<svg class="a" style="left:441px;top:51px" width="24" height="24" viewBox="0 0 24 24"><ellipse cx="12.65" cy="12.50" rx="10.2" ry="9.75" fill="#000"/><g transform="translate(12.65 12.50)"><path d="M-3.9 -3.7L0.75 -6.85V4.4" fill="none" stroke="#fff" stroke-width="1.75" stroke-linejoin="bevel"/></g></svg>
<svg class="a" style="left:315px;top:212px" width="24" height="24" viewBox="0 0 24 24"><ellipse cx="12.65" cy="12.65" rx="10.2" ry="9.75" fill="#000"/><g transform="translate(12.65 12.65)"><path d="M-4.6 -4.3C-3.8 -6.0 -2.2 -6.8 -0.3 -6.8C2.4 -6.8 3.9 -5.2 3.9 -3.2C3.9 -1.0 2.2 1.0 -4.7 6.1H5.25" fill="none" stroke="#fff" stroke-width="1.5" stroke-linejoin="bevel"/></g></svg>
<svg class="a" style="left:688px;top:212px" width="24" height="24" viewBox="0 0 24 24"><ellipse cx="12.65" cy="12.65" rx="10.2" ry="9.75" fill="#000"/><g transform="translate(12.65 12.65)"><path d="M-5.0 -6.0C-4.0 -6.6 -2.8 -6.8 -1.6 -6.8C1.0 -6.8 2.6 -5.6 2.6 -3.7C2.6 -1.8 1.0 -0.9 -1.8 -0.9C1.2 -0.9 3.2 0.3 3.2 2.0C3.2 3.9 1.4 4.8 -1.4 4.8C-2.8 4.8 -4.1 4.5 -5.0 3.9" fill="none" stroke="#fff" stroke-width="1.5" stroke-linejoin="bevel"/></g></svg>
<svg class="a" style="left:441px;top:345px" width="24" height="24" viewBox="0 0 24 24"><ellipse cx="12.75" cy="12.00" rx="10.2" ry="9.75" fill="#000"/><g transform="translate(12.75 12.00)"><path d="M2.2 6.45V-6.4L-4.5 3.9H4.15" fill="none" stroke="#fff" stroke-width="1.5" stroke-linejoin="bevel"/></g></svg>
</body></html>
